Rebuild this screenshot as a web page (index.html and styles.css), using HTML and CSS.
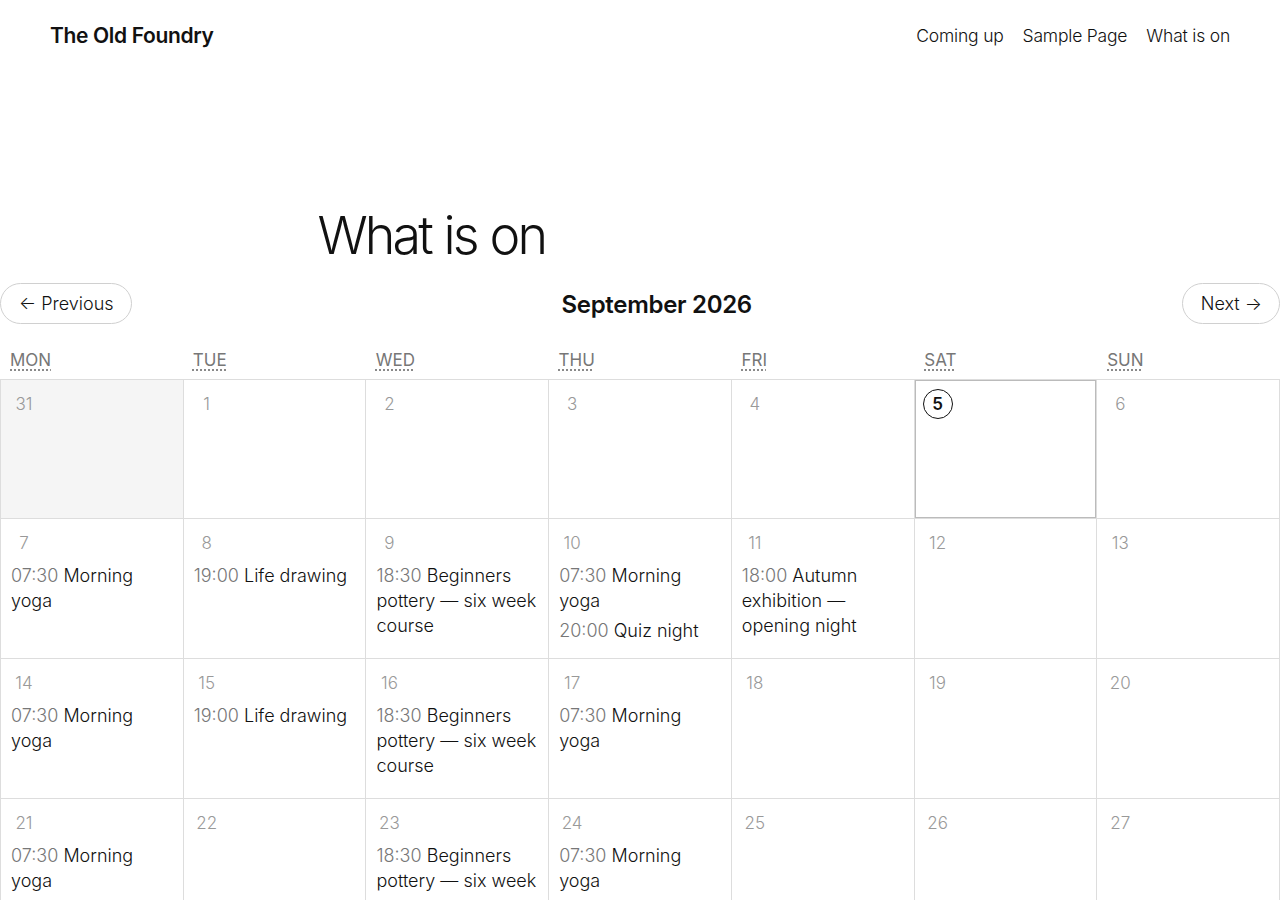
FILE: index.html
```html
<!DOCTYPE html>
<html lang="en">
<head>
<meta charset="utf-8">
<title>What is on – The Old Foundry</title>
<link rel="stylesheet" href="styles.css">
</head>
<body>
<header class="site-header">
  <a class="site-title" href="#">The Old Foundry</a>
  <nav class="site-nav">
    <a href="#">Coming up</a>
    <a href="#">Sample Page</a>
    <a href="#">What is on</a>
  </nav>
</header>
<main class="page">
  <h1 class="page-title">What is on</h1>
  <section class="calendar">
    <div class="cal-nav">
      <a class="cal-btn" href="#">← Previous</a>
      <h2 class="cal-month">September 2026</h2>
      <a class="cal-btn" href="#">Next →</a>
    </div>
    <div class="cal-weekdays">
      <abbr title="Monday">MON</abbr>
      <abbr title="Tuesday">TUE</abbr>
      <abbr title="Wednesday">WED</abbr>
      <abbr title="Thursday">THU</abbr>
      <abbr title="Friday">FRI</abbr>
      <abbr title="Saturday">SAT</abbr>
      <abbr title="Sunday">SUN</abbr>
    </div>
    <div class="cal-grid">
      <div class="day other"><span class="num">31</span></div>
      <div class="day"><span class="num">1</span></div>
      <div class="day"><span class="num">2</span></div>
      <div class="day"><span class="num">3</span></div>
      <div class="day"><span class="num">4</span></div>
      <div class="day today"><span class="num">5</span></div>
      <div class="day"><span class="num">6</span></div>

      <div class="day"><span class="num">7</span>
        <p class="event"><span class="time">07:30</span> Morning yoga</p></div>
      <div class="day"><span class="num">8</span>
        <p class="event"><span class="time">19:00</span> Life drawing</p></div>
      <div class="day"><span class="num">9</span>
        <p class="event"><span class="time">18:30</span> Beginners pottery — six week course</p></div>
      <div class="day"><span class="num">10</span>
        <p class="event"><span class="time">07:30</span> Morning yoga</p>
        <p class="event"><span class="time">20:00</span> Quiz night</p></div>
      <div class="day"><span class="num">11</span>
        <p class="event"><span class="time">18:00</span> Autumn exhibition — opening night</p></div>
      <div class="day"><span class="num">12</span></div>
      <div class="day"><span class="num">13</span></div>

      <div class="day"><span class="num">14</span>
        <p class="event"><span class="time">07:30</span> Morning yoga</p></div>
      <div class="day"><span class="num">15</span>
        <p class="event"><span class="time">19:00</span> Life drawing</p></div>
      <div class="day"><span class="num">16</span>
        <p class="event"><span class="time">18:30</span> Beginners pottery — six week course</p></div>
      <div class="day"><span class="num">17</span>
        <p class="event"><span class="time">07:30</span> Morning yoga</p></div>
      <div class="day"><span class="num">18</span></div>
      <div class="day"><span class="num">19</span></div>
      <div class="day"><span class="num">20</span></div>

      <div class="day"><span class="num">21</span>
        <p class="event"><span class="time">07:30</span> Morning yoga</p></div>
      <div class="day"><span class="num">22</span></div>
      <div class="day"><span class="num">23</span>
        <p class="event"><span class="time">18:30</span> Beginners pottery — six week course</p></div>
      <div class="day"><span class="num">24</span>
        <p class="event"><span class="time">07:30</span> Morning yoga</p></div>
      <div class="day"><span class="num">25</span></div>
      <div class="day"><span class="num">26</span></div>
      <div class="day"><span class="num">27</span></div>
    </div>
  </section>
</main>
</body>
</html>
```

FILE: styles.css
```css
* { box-sizing: border-box; }

html, body {
  margin: 0;
  padding: 0;
  background: #fff;
  color: #111;
  font-family: Inter, "Noto Sans", "DejaVu Sans", sans-serif;
  font-weight: 300;
}

a { color: inherit; text-decoration: none; }

.site-header {
  display: flex;
  justify-content: space-between;
  align-items: center;
  height: 71px;
  padding: 0 50px;
}

.site-title {
  font-size: 21px;
  font-weight: 600;
  letter-spacing: -0.35px;
  color: #111;
}

.site-nav {
  display: flex;
  gap: 19px;
  font-size: 17.5px;
  font-weight: 300;
  letter-spacing: -0.2px;
}

.page { padding-top: 131px; }

.page-title {
  width: 645px;
  margin: 0 auto 13px;
  font-size: 52px;
  line-height: 1.3;
  font-weight: 300;
  letter-spacing: -2.9px;
  word-spacing: 1px;
  color: #111;
}

.cal-nav {
  display: flex;
  justify-content: space-between;
  align-items: center;
  height: 41px;
}

.cal-btn {
  display: inline-flex;
  align-items: center;
  height: 41px;
  padding: 1px 17px 0 18px;
  border: 1px solid #d0d0d0;
  border-radius: 999px;
  font-size: 18px;
  font-weight: 300;
  color: #111;
}

.cal-month {
  margin: 0;
  padding-top: 3px;
  font-size: 24px;
  font-weight: 600;
  letter-spacing: -0.3px;
  color: #111;
}

.cal-weekdays {
  display: grid;
  grid-template-columns: repeat(7, 1fr);
  height: 55px;
  align-items: center;
  padding-top: 17px;
}

.cal-weekdays abbr {
  justify-self: start;
  margin-left: 10px;
  font-size: 17px;
  font-weight: 400;
  color: #777;
  text-decoration: underline dotted #777;
  text-underline-offset: 4px;
}

.cal-grid {
  display: grid;
  grid-template-columns: repeat(7, 1fr);
  grid-template-rows: 139px;
  grid-auto-rows: 140px;
  border-top: 1px solid #ddd;
  border-left: 1px solid #ddd;
}

.day {
  border-right: 1px solid #ddd;
  border-bottom: 1px solid #ddd;
  padding: 9px 10px 0;
  overflow: hidden;
}

.day.other { background: #f5f5f5; }

.day.today {
  box-shadow: inset 0 0 0 1px #bbb;
}

.num {
  display: flex;
  align-items: center;
  justify-content: center;
  width: 30px;
  height: 30px;
  margin-left: -2px;
  margin-bottom: 5px;
  font-size: 17px;
  color: #999;
}

.today .num {
  border: 1.5px solid #111;
  border-radius: 50%;
  color: #111;
  font-weight: 600;
}

.event {
  margin: 0 0 5px;
  font-size: 18px;
  line-height: 25px;
  font-weight: 300;
  color: #111;
}

.event .time { color: #777; }
```
